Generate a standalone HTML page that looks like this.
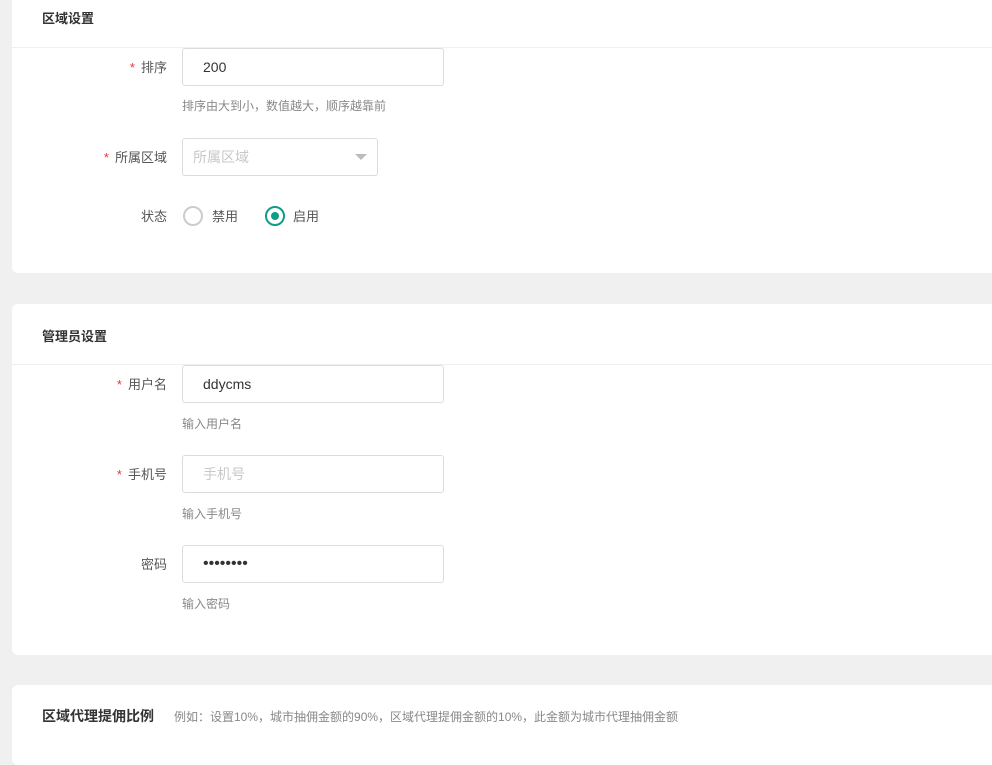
<!DOCTYPE html>
<html><head><meta charset="utf-8"><style>
body{margin:0;width:992px;height:744px;background:#f0f0f0;font-family:"Liberation Sans","Noto Sans CJK SC",sans-serif;overflow:hidden;position:relative}
.card{position:absolute;left:12px;right:0;background:#fff;border-radius:6px 0 0 6px}
.hd{position:absolute;left:30px;font-size:13px;font-weight:bold;color:#333}
.line{position:absolute;left:0;right:0;height:1px;background:#efefef}
.lab{position:absolute;width:155px;text-align:right;font-size:13px;color:#555;left:0}
.lab i{color:#e33;font-style:normal;margin-right:6px}
.inp{position:absolute;left:170px;width:260px;height:36px;border:1px solid #dcdcdc;border-radius:3px;box-sizing:content-box;font-size:14px;color:#333;line-height:36px;text-indent:20px}
.help{position:absolute;left:170px;font-size:12px;color:#888}
.rad{position:absolute;width:16px;height:16px;border:2px solid #ccc;border-radius:50%;box-sizing:border-box}
</style></head><body>
<div class="card" style="top:-10px;height:283px">
 <div class="hd" style="top:18px">区域设置</div>
 <div class="line" style="top:57px"></div>
 <div class="lab" style="top:67px"><i>*</i>排序</div>
 <div class="inp" style="top:58px">200</div>
 <div class="help" style="top:107px">排序由大到小，数值越大，顺序越靠前</div>
 <div class="lab" style="top:157px"><i>*</i>所属区域</div>
 <div class="inp" style="top:148px;width:194px;color:#c8c8c8;text-indent:10px">所属区域<span style="position:absolute;right:10px;top:15px;width:0;height:0;border-left:6px solid transparent;border-right:6px solid transparent;border-top:6px solid #bbb"></span></div>
 <div class="lab" style="top:216px">状态</div>
 <div class="rad" style="left:171px;top:216px;width:20px;height:20px"></div>
 <div style="position:absolute;left:200px;top:216px;font-size:13px;color:#555">禁用</div>
 <div class="rad" style="left:253px;top:216px;width:20px;height:20px;border-color:#0f9d8a"><div style="width:8px;height:8px;background:#0f9d8a;border-radius:50%;margin:4px"></div></div>
 <div style="position:absolute;left:281px;top:216px;font-size:13px;color:#555">启用</div>
</div>
<div class="card" style="top:304px;height:351px">
 <div class="hd" style="top:22px">管理员设置</div>
 <div class="line" style="top:60px"></div>
 <div class="lab" style="top:70px"><i>*</i>用户名</div>
 <div class="inp" style="top:61px">ddycms</div>
 <div class="help" style="top:111px">输入用户名</div>
 <div class="lab" style="top:160px"><i>*</i>手机号</div>
 <div class="inp" style="top:151px;color:#c8c8c8">手机号</div>
 <div class="help" style="top:201px">输入手机号</div>
 <div class="lab" style="top:250px">密码</div>
 <div class="inp" style="top:241px;font-size:16px">••••••••</div>
 <div class="help" style="top:291px">输入密码</div>
</div>
<div class="card" style="top:685px;height:80px">
 <div class="hd" style="top:21px;font-size:14px">区域代理提佣比例<span style="font-weight:normal;font-size:12px;color:#888;margin-left:20px">例如：设置10%，城市抽佣金额的90%，区域代理提佣金额的10%，此金额为城市代理抽佣金额</span></div>
</div>
</body></html>
